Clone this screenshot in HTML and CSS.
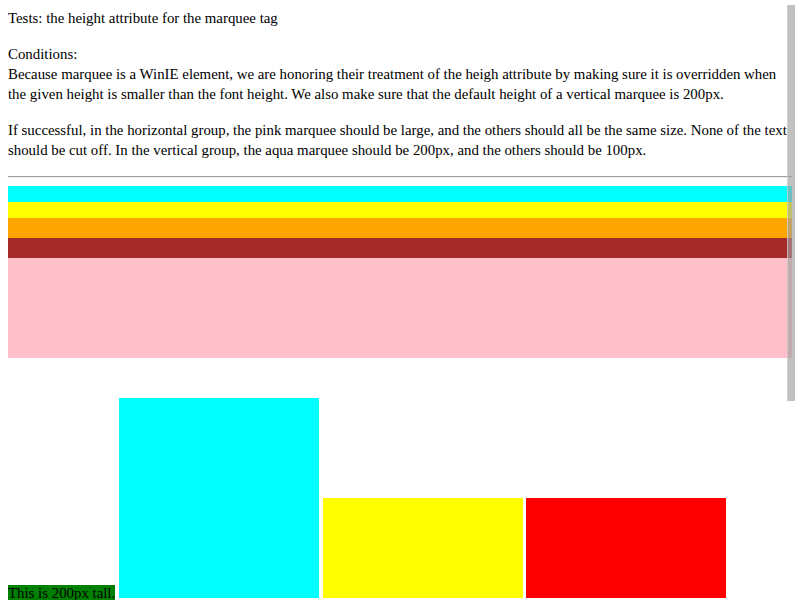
FILE: index.html
```html
<!DOCTYPE html>
<html>
<head>
<meta charset="utf-8">
<title>marquee height</title>
<link rel="stylesheet" href="styles.css">
</head>
<body>
<div class="intro">Tests: the height attribute for the marquee tag</div>
<p class="para">Conditions:<br>Because marquee is a WinIE element, we are honoring their treatment of the heigh attribute by making sure it is overridden when the given height is smaller than the font height. We also make sure that the default height of a vertical marquee is 200px.</p>
<p class="para">If successful, in the horizontal group, the pink marquee should be large, and the others should all be the same size. None of the text should be cut off. In the vertical group, the aqua marquee should be 200px, and the others should be 100px.</p>
<hr class="rule">
<div class="hgroup">
  <div class="bar bar-aqua"></div>
  <div class="bar bar-yellow"></div>
  <div class="bar bar-orange"></div>
  <div class="bar bar-brown"></div>
  <div class="bar bar-pink"></div>
</div>
<div class="vgroup"><span class="tall-label">This is 200px tall.</span> <span class="vbox vbox-aqua"></span> <span class="vbox vbox-yellow"></span> <span class="vbox vbox-red"></span></div>
<div class="scrollbar"></div>
</body>
</html>
```
FILE: styles.css
```css
html, body {
  background: #ffffff;
}
body {
  margin: 8px;
  font-family: "Liberation Serif", "Times New Roman", serif;
  font-size: 14.85px;
  line-height: 20px;
  color: #000000;
  overflow: hidden;
}
.intro {
  margin: 0;
}
.para {
  margin: 16px 0;
}
.rule {
  margin: 0 0 8px 0;
  border: 0;
  border-top: 1px solid #a0a0a0;
  border-bottom: 1px solid #eeeeee;
  height: 0;
}
.hgroup {
  display: flex;
  flex-direction: column;
}
.bar {
  width: 100%;
}
.bar-aqua { background: #00ffff; height: 16px; }
.bar-yellow { background: #ffff00; height: 16px; }
.bar-orange { background: #ffa500; height: 20px; }
.bar-brown { background: #a52a2a; height: 20px; }
.bar-pink { background: #ffc0cb; height: 100px; }
.vgroup {
  margin-top: 40px;
  white-space: nowrap;
  line-height: 17px;
}
.tall-label {
  background: #008000;
}
.vbox {
  display: inline-block;
  width: 200px;
  vertical-align: baseline;
  overflow: hidden;
}
.vbox-aqua { background: #00ffff; height: 200px; }
.vbox-yellow { background: #ffff00; height: 100px; }
.vbox-red { background: #ff0000; height: 100px; }
.scrollbar {
  position: absolute;
  top: 5px;
  left: 787px;
  width: 8px;
  height: 396px;
  background: rgba(160, 160, 160, 0.65);
  border-left: 1px solid rgba(220, 220, 220, 0.6);
  box-sizing: border-box;
}
```
